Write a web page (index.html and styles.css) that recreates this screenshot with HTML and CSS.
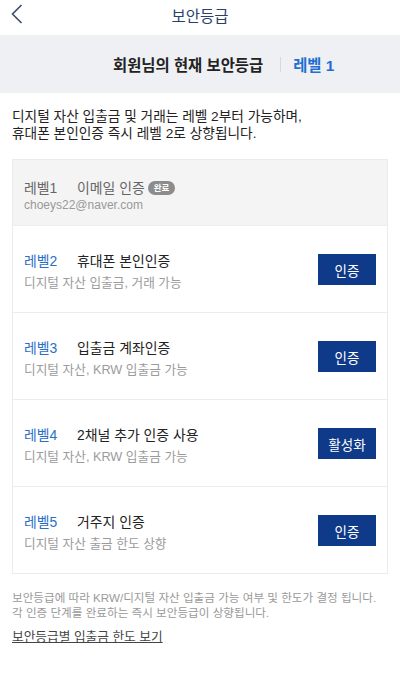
FILE: index.html
```html
<!DOCTYPE html>
<html lang="ko">

<head>
    <meta charset="UTF-8">
    <meta name="viewport" content="width=device-width, initial-scale=1.0">
    <title>보안등급</title>
    <link rel="stylesheet" href="styles.css">
</head>

<body>
    <div id="header">
        <a class="back" href="#">
            <svg width="12" height="20" viewBox="0 0 12 20">
                <path d="M10.5 1 L1.5 10 L10.5 19" fill="none" stroke="#3d4a6a" stroke-width="1.6" />
            </svg>
        </a>
        <div class="title">보안등급</div>
    </div>

    <div id="current-level">
        <span class="label">회원님의 현재 보안등급</span>
        <span class="divider"></span>
        <span class="value">레벨 1</span>
    </div>

    <p id="notice">디지털 자산 입출금 및 거래는 레벨 2부터 가능하며,<br>휴대폰 본인인증 즉시 레벨 2로 상향됩니다.</p>

    <div id="level-list">
        <div class="level-row done">
            <div class="level-text">
                <div class="level-title"><span class="level-no">레벨1</span>이메일 인증 <span class="badge">완료</span></div>
                <div class="level-sub email">choeys22@naver.com</div>
            </div>
        </div>
        <div class="level-row">
            <div class="level-text">
                <div class="level-title"><span class="level-no">레벨2</span>휴대폰 본인인증</div>
                <div class="level-sub">디지털 자산 입출금, 거래 가능</div>
            </div>
            <button class="level-button">인증</button>
        </div>
        <div class="level-row">
            <div class="level-text">
                <div class="level-title"><span class="level-no">레벨3</span>입출금 계좌인증</div>
                <div class="level-sub">디지털 자산, KRW 입출금 가능</div>
            </div>
            <button class="level-button">인증</button>
        </div>
        <div class="level-row">
            <div class="level-text">
                <div class="level-title"><span class="level-no">레벨4</span>2채널 추가 인증 사용</div>
                <div class="level-sub">디지털 자산, KRW 입출금 가능</div>
            </div>
            <button class="level-button">활성화</button>
        </div>
        <div class="level-row">
            <div class="level-text">
                <div class="level-title"><span class="level-no">레벨5</span>거주지 인증</div>
                <div class="level-sub">디지털 자산 출금 한도 상향</div>
            </div>
            <button class="level-button">인증</button>
        </div>
    </div>

    <p id="footer-note">보안등급에 따라 KRW/디지털 자산 입출금 가능 여부 및 한도가 결정 됩니다.<br>각 인증 단계를 완료하는 즉시 보안등급이 상향됩니다.</p>
    <a id="limit-link" href="#">보안등급별 입출금 한도 보기</a>
</body>

</html>
```

FILE: styles.css
```css
body {
    font-family: 'Liberation Sans', 'Noto Sans CJK KR', sans-serif;
    margin: 0;
    padding: 0;
    background-color: #fff;
    color: #222;
}

#header {
    height: 35px;
    display: flex;
    align-items: center;
    justify-content: center;
    position: relative;
}

#header .back {
    position: absolute;
    left: 11px;
    top: 4px;
    display: flex;
}

#header .title {
    font-size: 15.5px;
    color: #2b3f6c;
    margin-top: -6px;
}

#current-level {
    height: 58px;
    background-color: #eef0f4;
    display: flex;
    align-items: center;
    padding-left: 113px;
    font-weight: bold;
    font-size: 15.4px;
}

#current-level .label {
    color: #222;
}

#current-level .divider {
    width: 1px;
    height: 15px;
    background-color: #d6d9e0;
    margin: 0 12px 0 17px;
}

#current-level .value {
    color: #1f6ed0;
}

#notice {
    margin: 0;
    padding: 15px 12px 0;
    font-size: 13.7px;
    line-height: 17px;
    color: #222;
}

#level-list {
    margin: 17px 12px 0;
    border: 1px solid #ebebeb;
}

.level-row {
    height: 86px;
    display: flex;
    align-items: center;
    justify-content: space-between;
    padding: 0 11px 0 11px;
    border-top: 1px solid #ededed;
}

.level-row:first-child {
    border-top: none;
}

.level-row.done {
    height: 65px;
    background-color: #f4f4f4;
    align-items: flex-start;
}

.level-row.done .level-text {
    margin-top: 0;
    padding-top: 19px;
}

.level-text {
    margin-top: 5px;
}

.level-title {
    font-size: 13.9px;
    line-height: 18px;
    color: #222;
    display: flex;
    align-items: center;
}

.level-no {
    color: #2a6fc7;
    width: 53px;
}

.done .level-title,
.done .level-no {
    color: #666;
}

.badge {
    display: inline-block;
    background-color: #8c8c8c;
    color: #fff;
    font-size: 8.5px;
    font-weight: bold;
    line-height: 14px;
    padding: 0 6px;
    border-radius: 7px;
    margin-left: 3px;
}

.level-sub {
    font-size: 12.7px;
    line-height: 16px;
    color: #9b9b9b;
    margin-top: 5px;
}

.level-sub.email {
    font-size: 12px;
    color: #999;
    margin-top: 0;
}

.level-button {
    width: 58px;
    height: 31px;
    background-color: #0f3a8a;
    color: #fff;
    border: none;
    font-family: 'Liberation Sans', 'Noto Sans CJK KR', sans-serif;
    font-size: 13.5px;
    padding: 0;
    margin-top: 1px;
}

#footer-note {
    margin: 16px 12px 0;
    font-size: 11.6px;
    line-height: 15px;
    color: #9a9a9a;
    white-space: nowrap;
}

#limit-link {
    display: inline-block;
    margin: 6px 12px 0;
    font-size: 12.7px;
    color: #444;
    text-decoration: underline;
}
```
